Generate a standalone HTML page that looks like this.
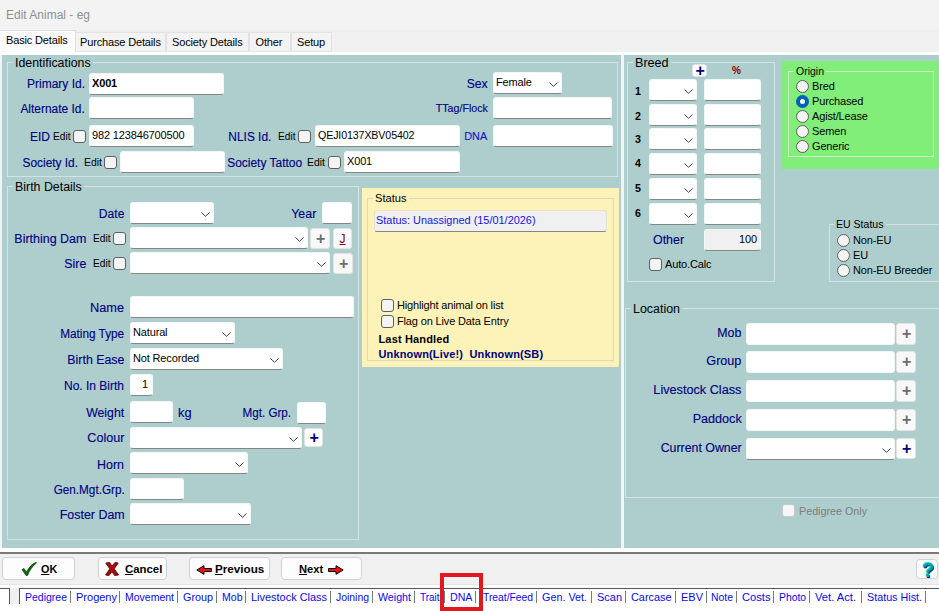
<!DOCTYPE html>
<html><head><meta charset="utf-8"><title>Edit Animal - eg</title>
<style>
*{margin:0;padding:0;}
html,body{width:939px;height:611px;overflow:hidden;background:#f3f3f3;font-family:"Liberation Sans",sans-serif;}
body{position:relative;}
div{position:absolute;box-sizing:border-box;white-space:nowrap;}
.title{left:6px;top:7px;font-size:12px;color:#909090;line-height:16px;}
.tab{background:#f3f3f3;border:1px solid #e2e2e2;border-bottom:1px solid #e6e6e6;font-size:11px;letter-spacing:-0.15px;line-height:19px;}
.tab span{position:absolute;left:5px;top:0px;}
.seltab{background:#fbfbfb;border-color:#e0e0e0;border-left:none;border-bottom:none;}
.seltab span{left:6px;top:0px;}
.gb{border:1px solid #d3e2e2;}
.gl{font-size:13px;line-height:12px;height:13px;padding:0 2px;color:#000;}
.gl span{position:absolute;left:2px;top:0.5px;display:inline-block;transform-origin:0 50%;}
.gl.sm2{font-size:11px;}
.gl.br{letter-spacing:0.1px;}
.lb{font-size:12px;line-height:16px;color:#000080;-webkit-text-stroke:0.12px #000080;transform:scaleX(.98);transform-origin:0 50%;}
.lb.r{transform-origin:100% 50%;}
.r{text-align:right;}
.sm{font-size:11px;line-height:16px;color:#000;letter-spacing:-0.15px;}
.bd{font-size:11px;font-weight:bold;line-height:16px;color:#000;letter-spacing:0.15px;}
.in{background:#fff;border:1px solid #f1f6f6;border-bottom-color:#868686;border-radius:3px;font-size:11px;letter-spacing:-0.15px;line-height:19.5px;padding-left:2px;color:#000;overflow:hidden;}
.in b{font-size:11px;}
.sx{display:inline-block;transform-origin:0 50%;}
.cb .chev{position:absolute;right:3.5px;top:8.5px;}
.stat{background:#f0f0f0;color:#1414e6;border-color:#e6e3c8;border-bottom-color:#868686;line-height:19px;padding-left:1px;}
.ck{background:#f4f4f4;border:1px solid #5f5f5f;border-radius:3px;}
.rd{background:#f4f4f4;border:1px solid #5f5f5f;border-radius:50%;}
.rd.sel{background:#fff;border:4px solid #005fb8;}
.bt{border-radius:3px;border:1px solid #e3e3e3;}
.gbt{background:#f8f8f8;}
.wbt{background:#fdfdfd;}
.jbt{background:#fafafa;color:#8b0000;font-size:12px;text-align:center;line-height:21px;}
.pl{position:absolute;left:50%;top:50%;width:12px;height:12px;margin:-6px 0 0 -5.3px;line-height:12px;text-align:center;font-size:16px;font-weight:bold;}
.pl.g{color:#6c6c6c;}
.pl.n{color:#000080;}
.bb{background:#fdfdfd;border:1px solid #d2d2d2;border-radius:4px;font-size:11px;font-weight:bold;}
.bb span{position:absolute;top:5px;line-height:13px;letter-spacing:0.2px;}
.q{left:5px;top:0px !important;font-size:20px;line-height:20px !important;color:#00a0a0;text-shadow:-0.7px -0.7px 0 #10e8e8,0.8px 0.8px 0 #10107a;letter-spacing:0 !important;}
.bt2{font-size:11px;letter-spacing:-0.15px;line-height:16px;color:#0808f0;}
</style></head>
<body>
<div class="title">Edit Animal - eg</div>
<div class="" style="left:0px;top:30px;width:939px;height:22px;background:#f0f0f0;"></div>
<div class="tab" style="left:75px;top:32px;width:91px;height:20px;"><span style="left:4px">Purchase Details</span></div>
<div class="tab" style="left:166px;top:32px;width:83px;height:20px;"><span style="left:5px">Society Details</span></div>
<div class="tab" style="left:249px;top:32px;width:42px;height:20px;"><span style="left:5.5px">Other</span></div>
<div class="tab" style="left:291px;top:32px;width:41px;height:20px;"><span style="left:5px">Setup</span></div>
<div class="" style="left:0px;top:52px;width:939px;height:3px;background:#fff;"></div>
<div class="tab seltab" style="left:0px;top:30px;width:76px;height:22px;"><span>Basic Details</span></div>
<div class="" style="left:2px;top:55px;width:619px;height:493px;background:#aecdcd;"></div>
<div class="" style="left:624px;top:55px;width:315px;height:493px;background:#aecdcd;"></div>
<div class="" style="left:621px;top:55px;width:3px;height:493px;background:#f4f4f4;"></div>
<div class="gb" style="left:7px;top:62px;width:611px;height:115px;border-color:#d3e2e2;"></div>
<div class="gl" style="left:12.9px;top:56px;width:80.1px;font-size:12px;background:#aecdcd;"><span style="transform:scaleX(1.0303);">Identifications</span></div>
<div class="lb r" style="right:854.2px;top:75.5px;transform:scaleX(0.9999);">Primary Id.</div>
<div class="in" style="left:89px;top:73px;width:135px;height:22px;"><b>X001</b></div>
<div class="lb r" style="right:854.2px;top:100.7px;transform:scaleX(0.9937);">Alternate Id.</div>
<div class="in" style="left:89px;top:97px;width:105px;height:22px;"></div>
<div class="lb r" style="right:889.0px;top:129px;transform:scaleX(0.9998);">EID</div>
<div class="sm" style="left:52.5px;top:127.69999999999999px;font-size:11px;letter-spacing:0;transform:scaleX(0.9232);transform-origin:0 50%;">Edit</div>
<div class="ck" style="left:73px;top:130px;width:13px;height:13px;"></div>
<div class="in" style="left:89px;top:125px;width:105px;height:22px;">982 123846700500</div>
<div class="lb r" style="right:861.0px;top:155px;transform:scaleX(0.9906);">Society Id.</div>
<div class="sm" style="left:83.5px;top:154px;font-size:11px;letter-spacing:0;transform:scaleX(0.9496);transform-origin:0 50%;">Edit</div>
<div class="ck" style="left:104px;top:156px;width:13px;height:13px;"></div>
<div class="in" style="left:120px;top:151px;width:105px;height:22px;"></div>
<div class="lb r" style="right:667.5px;top:129px;transform:scaleX(0.9918);">NLIS Id.</div>
<div class="sm" style="left:277.5px;top:127.69999999999999px;font-size:11px;letter-spacing:0;transform:scaleX(0.9232);transform-origin:0 50%;">Edit</div>
<div class="ck" style="left:298px;top:130px;width:13px;height:13px;"></div>
<div class="in" style="left:315px;top:125px;width:145px;height:22px;"><span class="sx" style="transform:scaleX(.972)">QEJI0137XBV05402</span></div>
<div class="lb r" style="right:636.5px;top:155px;transform:scaleX(0.9979);">Society Tattoo</div>
<div class="sm" style="left:306.5px;top:154px;font-size:11px;letter-spacing:0;transform:scaleX(0.9496);transform-origin:0 50%;">Edit</div>
<div class="ck" style="left:328px;top:156px;width:13px;height:13px;"></div>
<div class="in" style="left:344px;top:151px;width:116px;height:22px;">X001</div>
<div class="lb r" style="right:451.5px;top:75.5px;transform:scaleX(1.0156);">Sex</div>
<div class="in cb" style="left:493px;top:72px;width:69px;height:22px;">Female<svg class="chev" width="9" height="5" viewBox="0 0 9 5"><path d="M0.5 0.5 L4.5 4.3 L8.5 0.5" fill="none" stroke="#3c3c3c" stroke-width="1"/></svg></div>
<div class="lb r" style="right:451.5px;top:100px;font-size:11px;transform:scaleX(0.9667);">TTag/Flock</div>
<div class="in" style="left:493px;top:97px;width:119px;height:22px;"></div>
<div class="lb r" style="right:451.5px;top:128px;font-size:11px;transform:scaleX(0.9903);color:#1a1acd;">DNA</div>
<div class="in" style="left:493px;top:125px;width:120px;height:22px;"></div>
<div class="gb" style="left:7px;top:186px;width:352px;height:354px;border-color:#d3e2e2;"></div>
<div class="gl" style="left:12.7px;top:180px;width:71.3px;font-size:12px;background:#aecdcd;"><span style="transform:scaleX(1.0327);">Birth Details</span></div>
<div class="lb r" style="right:814.5px;top:205.5px;transform:scaleX(1.006);">Date</div>
<div class="in cb" style="left:130px;top:202px;width:84px;height:22px;"><svg class="chev" width="9" height="5" viewBox="0 0 9 5"><path d="M0.5 0.5 L4.5 4.3 L8.5 0.5" fill="none" stroke="#3c3c3c" stroke-width="1"/></svg></div>
<div class="lb r" style="right:622.5px;top:205.5px;transform:scaleX(1.0311);">Year</div>
<div class="in" style="left:322px;top:202px;width:30px;height:22px;"></div>
<div class="lb r" style="right:852.5px;top:230.5px;transform:scaleX(1.0381);">Birthing Dam</div>
<div class="sm" style="left:92.5px;top:229.8px;font-size:11px;letter-spacing:0;transform:scaleX(0.9232);transform-origin:0 50%;">Edit</div>
<div class="ck" style="left:113px;top:232px;width:13px;height:13px;"></div>
<div class="in cb" style="left:130px;top:227px;width:178px;height:22px;"><svg class="chev" width="9" height="5" viewBox="0 0 9 5"><path d="M0.5 0.5 L4.5 4.3 L8.5 0.5" fill="none" stroke="#3c3c3c" stroke-width="1"/></svg></div>
<div class="bt gbt" style="left:310px;top:228px;width:20px;height:21px;"><span class="pl g">+</span></div>
<div class="bt jbt" style="left:333px;top:228px;width:19px;height:21px;"><u>J</u></div>
<div class="lb r" style="right:852.5px;top:255.5px;transform:scaleX(1.0309);">Sire</div>
<div class="sm" style="left:92.5px;top:254.8px;font-size:11px;letter-spacing:0;transform:scaleX(0.9232);transform-origin:0 50%;">Edit</div>
<div class="ck" style="left:113px;top:257px;width:13px;height:13px;"></div>
<div class="in cb" style="left:130px;top:252px;width:200px;height:22px;"><svg class="chev" width="9" height="5" viewBox="0 0 9 5"><path d="M0.5 0.5 L4.5 4.3 L8.5 0.5" fill="none" stroke="#3c3c3c" stroke-width="1"/></svg></div>
<div class="bt gbt" style="left:333px;top:253px;width:20px;height:21px;"><span class="pl g">+</span></div>
<div class="lb r" style="right:814.5px;top:299.5px;transform:scaleX(1.0622);">Name</div>
<div class="in" style="left:130px;top:296px;width:224px;height:22px;"></div>
<div class="lb r" style="right:814.5px;top:325.5px;transform:scaleX(0.9823);">Mating Type</div>
<div class="in cb" style="left:130px;top:322px;width:105px;height:22px;">Natural<svg class="chev" width="9" height="5" viewBox="0 0 9 5"><path d="M0.5 0.5 L4.5 4.3 L8.5 0.5" fill="none" stroke="#3c3c3c" stroke-width="1"/></svg></div>
<div class="lb r" style="right:814.5px;top:352.3px;transform:scaleX(1.0296);">Birth Ease</div>
<div class="in cb" style="left:130px;top:348px;width:153px;height:22px;">Not Recorded<svg class="chev" width="9" height="5" viewBox="0 0 9 5"><path d="M0.5 0.5 L4.5 4.3 L8.5 0.5" fill="none" stroke="#3c3c3c" stroke-width="1"/></svg></div>
<div class="lb r" style="right:814.5px;top:377.5px;transform:scaleX(0.9996);">No. In Birth</div>
<div class="in" style="left:130px;top:374px;width:23px;height:22px;text-align:right;padding-right:4px;">1</div>
<div class="lb r" style="right:814.5px;top:405px;transform:scaleX(1.0234);">Weight</div>
<div class="in" style="left:130px;top:401px;width:43px;height:22px;"></div>
<div class="lb" style="left:177.5px;top:405px;transform:scaleX(1.0652);transform-origin:0 50%;">kg</div>
<div class="lb r" style="right:648.0px;top:405px;transform:scaleX(0.9698);">Mgt. Grp.</div>
<div class="in" style="left:297px;top:402px;width:29px;height:22px;"></div>
<div class="lb r" style="right:814.5px;top:430px;transform:scaleX(1.0467);">Colour</div>
<div class="in cb" style="left:130px;top:427px;width:172px;height:22px;"><svg class="chev" width="9" height="5" viewBox="0 0 9 5"><path d="M0.5 0.5 L4.5 4.3 L8.5 0.5" fill="none" stroke="#3c3c3c" stroke-width="1"/></svg></div>
<div class="bt wbt" style="left:304px;top:428px;width:19px;height:19px;"><span class="pl n">+</span></div>
<div class="lb r" style="right:814.5px;top:457px;transform:scaleX(1.0381);">Horn</div>
<div class="in cb" style="left:130px;top:452px;width:118px;height:22px;"><svg class="chev" width="9" height="5" viewBox="0 0 9 5"><path d="M0.5 0.5 L4.5 4.3 L8.5 0.5" fill="none" stroke="#3c3c3c" stroke-width="1"/></svg></div>
<div class="lb r" style="right:814.5px;top:481.5px;transform:scaleX(0.9767);">Gen.Mgt.Grp.</div>
<div class="in" style="left:130px;top:478px;width:54px;height:22px;"></div>
<div class="lb r" style="right:814.5px;top:506.5px;transform:scaleX(1.0371);">Foster Dam</div>
<div class="in cb" style="left:130px;top:503px;width:121px;height:22px;"><svg class="chev" width="9" height="5" viewBox="0 0 9 5"><path d="M0.5 0.5 L4.5 4.3 L8.5 0.5" fill="none" stroke="#3c3c3c" stroke-width="1"/></svg></div>
<div class="" style="left:362px;top:188px;width:257px;height:179px;background:#fdf3b9;"></div>
<div class="gb" style="left:367px;top:198px;width:247px;height:163px;border-color:#dcdabc;"></div>
<div class="gl" style="left:372.8px;top:193px;width:36.0px;font-size:11px;background:#fdf3b9;"><span style="transform:scaleX(1.0101);top:-1px;">Status</span></div>
<div class="in stat" style="left:374px;top:210px;width:233px;height:22px;"><span class="sx" style="letter-spacing:0;transform:scaleX(.992)">Status: Unassigned (15/01/2026)</span></div>
<div class="ck" style="left:381px;top:299px;width:13px;height:13px;"></div>
<div class="sm" style="left:397px;top:297.3px;">Highlight animal on list</div>
<div class="ck" style="left:381px;top:315px;width:13px;height:13px;"></div>
<div class="sm" style="left:397px;top:313.2px;">Flag on Live Data Entry</div>
<div class="bd" style="left:378.5px;top:330.8px;">Last Handled</div>
<div class="bd" style="left:378.5px;top:345.6px;color:#000080;">Unknown(Live!)&nbsp; Unknown(SB)</div>
<div class="gb" style="left:627px;top:62px;width:148px;height:220px;border-color:#d3e2e2;"></div>
<div class="gl" style="left:632.9px;top:56px;width:38.1px;font-size:12px;background:#aecdcd;"><span style="transform:scaleX(1.0493);">Breed</span></div>
<div class="bt wbt" style="left:692px;top:64px;width:15px;height:13px;"><span class="pl n">+</span></div>
<div class="bd" style="left:732px;top:62.8px;color:#8b0000;font-size:10px;">%</div>
<div class="bd" style="left:635px;top:82.5px;font-size:10.67px;">1</div>
<div class="in cb" style="left:649px;top:79px;width:48px;height:22px;"><svg class="chev" width="9" height="5" viewBox="0 0 9 5"><path d="M0.5 0.5 L4.5 4.3 L8.5 0.5" fill="none" stroke="#3c3c3c" stroke-width="1"/></svg></div>
<div class="in" style="left:704px;top:79px;width:57px;height:22px;"></div>
<div class="bd" style="left:635px;top:107.5px;font-size:10.67px;">2</div>
<div class="in cb" style="left:649px;top:104px;width:48px;height:22px;"><svg class="chev" width="9" height="5" viewBox="0 0 9 5"><path d="M0.5 0.5 L4.5 4.3 L8.5 0.5" fill="none" stroke="#3c3c3c" stroke-width="1"/></svg></div>
<div class="in" style="left:704px;top:104px;width:57px;height:22px;"></div>
<div class="bd" style="left:635px;top:131px;font-size:10.67px;">3</div>
<div class="in cb" style="left:649px;top:128px;width:48px;height:22px;"><svg class="chev" width="9" height="5" viewBox="0 0 9 5"><path d="M0.5 0.5 L4.5 4.3 L8.5 0.5" fill="none" stroke="#3c3c3c" stroke-width="1"/></svg></div>
<div class="in" style="left:704px;top:128px;width:57px;height:22px;"></div>
<div class="bd" style="left:635px;top:155.3px;font-size:10.67px;">4</div>
<div class="in cb" style="left:649px;top:153px;width:48px;height:22px;"><svg class="chev" width="9" height="5" viewBox="0 0 9 5"><path d="M0.5 0.5 L4.5 4.3 L8.5 0.5" fill="none" stroke="#3c3c3c" stroke-width="1"/></svg></div>
<div class="in" style="left:704px;top:153px;width:57px;height:22px;"></div>
<div class="bd" style="left:635px;top:180px;font-size:10.67px;">5</div>
<div class="in cb" style="left:649px;top:178px;width:48px;height:22px;"><svg class="chev" width="9" height="5" viewBox="0 0 9 5"><path d="M0.5 0.5 L4.5 4.3 L8.5 0.5" fill="none" stroke="#3c3c3c" stroke-width="1"/></svg></div>
<div class="in" style="left:704px;top:178px;width:57px;height:22px;"></div>
<div class="bd" style="left:635px;top:205px;font-size:10.67px;">6</div>
<div class="in cb" style="left:649px;top:203px;width:48px;height:22px;"><svg class="chev" width="9" height="5" viewBox="0 0 9 5"><path d="M0.5 0.5 L4.5 4.3 L8.5 0.5" fill="none" stroke="#3c3c3c" stroke-width="1"/></svg></div>
<div class="in" style="left:704px;top:203px;width:57px;height:22px;"></div>
<div class="lb r" style="right:254.5px;top:231.5px;transform:scaleX(1.0329);">Other</div>
<div class="in" style="left:704px;top:229px;width:57px;height:22px;background:#f0f0f0;text-align:right;padding-right:3px;">100</div>
<div class="ck" style="left:649px;top:258px;width:13px;height:13px;"></div>
<div class="sm" style="left:665px;top:255.7px;">Auto.Calc</div>
<div class="" style="left:781px;top:61px;width:158px;height:108px;background:#80ee78;"></div>
<div class="gb" style="left:788px;top:71px;width:146px;height:86px;border-color:#d2f0cc;"></div>
<div class="gl" style="left:793.5px;top:66px;width:32.5px;font-size:11px;background:#80ee78;"><span style="transform:scaleX(0.9543);top:-1px;">Origin</span></div>
<div class="rd" style="left:796px;top:79.5px;width:13px;height:13px;"></div>
<div class="sm" style="left:812px;top:78px;">Bred</div>
<div class="rd sel" style="left:796px;top:94.5px;width:13px;height:13px;"></div>
<div class="sm" style="left:812px;top:93px;">Purchased</div>
<div class="rd" style="left:796px;top:109.5px;width:13px;height:13px;"></div>
<div class="sm" style="left:812px;top:108px;">Agist/Lease</div>
<div class="rd" style="left:796px;top:124.5px;width:13px;height:13px;"></div>
<div class="sm" style="left:812px;top:123px;">Semen</div>
<div class="rd" style="left:796px;top:139.5px;width:13px;height:13px;"></div>
<div class="sm" style="left:812px;top:138px;">Generic</div>
<div class="gb" style="left:829px;top:224px;width:116px;height:58px;border-color:#d3e2e2;"></div>
<div class="gl" style="left:834.0px;top:219px;width:52.0px;font-size:11px;background:#aecdcd;"><span style="transform:scaleX(0.9591);top:-1px;">EU Status</span></div>
<div class="rd" style="left:837px;top:233.5px;width:13px;height:13px;"></div>
<div class="sm" style="left:853px;top:232px;">Non-EU</div>
<div class="rd" style="left:837px;top:248.5px;width:13px;height:13px;"></div>
<div class="sm" style="left:853px;top:247px;">EU</div>
<div class="rd" style="left:837px;top:263.5px;width:13px;height:13px;"></div>
<div class="sm" style="left:853px;top:262px;">Non-EU Breeder</div>
<div class="gb" style="left:625px;top:308px;width:320px;height:190px;border-color:#d3e2e2;"></div>
<div class="gl" style="left:630.5px;top:302px;width:51.5px;font-size:12px;background:#aecdcd;"><span style="transform:scaleX(1.0359);">Location</span></div>
<div class="lb r" style="right:197.5px;top:325.0px;transform:scaleX(1.0281);">Mob</div>
<div class="in" style="left:746px;top:323px;width:149px;height:22px;border-bottom-color:#f1f6f6;"></div>
<div class="bt gbt" style="left:896px;top:323px;width:20px;height:22px;"><span class="pl g">+</span></div>
<div class="lb r" style="right:197.5px;top:353.0px;transform:scaleX(1.0494);">Group</div>
<div class="in" style="left:746px;top:351px;width:149px;height:22px;border-bottom-color:#f1f6f6;"></div>
<div class="bt gbt" style="left:896px;top:351px;width:20px;height:22px;"><span class="pl g">+</span></div>
<div class="lb r" style="right:197.5px;top:382.0px;transform:scaleX(1.0556);">Livestock Class</div>
<div class="in" style="left:746px;top:380px;width:149px;height:22px;border-bottom-color:#f1f6f6;"></div>
<div class="bt gbt" style="left:896px;top:380px;width:20px;height:22px;"><span class="pl g">+</span></div>
<div class="lb r" style="right:197.5px;top:411.0px;transform:scaleX(1.0493);">Paddock</div>
<div class="in" style="left:746px;top:409px;width:149px;height:22px;border-bottom-color:#f1f6f6;"></div>
<div class="bt gbt" style="left:896px;top:409px;width:20px;height:22px;"><span class="pl g">+</span></div>
<div class="lb r" style="right:197.5px;top:439.5px;transform:scaleX(1.0293);">Current Owner</div>
<div class="in cb" style="left:746px;top:438px;width:149px;height:22px;"><svg class="chev" width="9" height="5" viewBox="0 0 9 5"><path d="M0.5 0.5 L4.5 4.3 L8.5 0.5" fill="none" stroke="#3c3c3c" stroke-width="1"/></svg></div>
<div class="bt wbt" style="left:896px;top:438px;width:20px;height:21px;"><span class="pl n">+</span></div>
<div class="ck" style="left:782px;top:504px;width:13px;height:13px;border-color:#c8c8c8;background:#f6f6f6;"></div>
<div class="lb" style="left:798.5px;top:502.5px;font-size:11.5px;letter-spacing:0;transform:scaleX(0.9331);transform-origin:0 50%;color:#7d7d7d;-webkit-text-stroke:0;">Pedigree Only</div>
<div class="" style="left:0px;top:548px;width:939px;height:4px;background:#fff;"></div>
<div class="" style="left:0px;top:552px;width:939px;height:2px;background:#7a7a7a;"></div>
<div class="" style="left:0px;top:554px;width:939px;height:31px;background:#f0f0f0;"></div>
<div class="bb" style="left:2px;top:557px;width:73px;height:23px;"><svg width="16" height="14" viewBox="0 0 16 14" style="position:absolute;left:18px;top:4px"><path d="M1 7.5 L3 6.5 L5.5 10 C8 5 11 2 15 0.3 L15.5 1 C12 3.5 9 7.5 6.5 13.5 L5 13.5 Z" fill="#0a6b0a" stroke="#003000" stroke-width="0.6"/></svg><span style="left:37.5px;transform:scaleX(0.9818);transform-origin:0 50%;letter-spacing:0"><u>O</u>K</span></div>
<div class="bb" style="left:98px;top:557px;width:69px;height:23px;"><svg width="14" height="14" viewBox="0 0 14 14" style="position:absolute;left:6px;top:4px"><path d="M0.8 1 L4.6 0.5 L7 4 L10 0.5 L13.2 1 L9.2 6.8 L13.5 13 L9.6 13.5 L7 9.6 L4 13.5 L0.6 13 L4.8 6.8 Z" fill="#a80c0c" stroke="#600000" stroke-width="0.9"/></svg><span style="left:25.5px;transform:scaleX(1.0341);transform-origin:0 50%;letter-spacing:0"><u>C</u>ancel</span></div>
<div class="bb" style="left:189px;top:557px;width:81px;height:23px;"><svg width="16" height="10" viewBox="0 0 16 10" style="position:absolute;left:6px;top:7px"><path d="M0.8 5 L8 0.7 L8 3.5 L15.4 3.5 L15.4 6.5 L8 6.5 L8 9.3 Z" fill="#ee1111" stroke="#000" stroke-width="1"/></svg><span style="left:24.80000000000001px;transform:scaleX(1.061);transform-origin:0 50%;letter-spacing:0"><u>P</u>revious</span></div>
<div class="bb" style="left:281px;top:557px;width:81px;height:23px;"><svg width="16" height="10" viewBox="0 0 16 10" style="position:absolute;left:45.5px;top:7px"><path d="M15.2 5 L8 0.7 L8 3.5 L0.6 3.5 L0.6 6.5 L8 6.5 L8 9.3 Z" fill="#ee1111" stroke="#000" stroke-width="1"/></svg><span style="left:16.899999999999977px;transform:scaleX(1.015);transform-origin:0 50%;letter-spacing:0"><u>N</u>ext</span></div>
<div class="bb" style="left:916px;top:559px;width:22px;height:20px;"><span class="q">?</span></div>
<div class="" style="left:0px;top:585px;width:939px;height:26px;background:#fff;"></div>
<div class="" style="left:0px;top:584px;width:939px;height:1px;background:#e6e6e6;"></div>
<div class="" style="left:0px;top:585px;width:939px;height:3px;background:#fbfbfb;"></div>
<div class="" style="left:0px;top:588px;width:10px;height:16px;background:#fff;border-top:1px solid #555;border-right:1px solid #555;box-sizing:border-box;"></div>
<div class="" style="left:10px;top:588px;width:9px;height:16px;background:#f0f0f0;"></div>
<div class="" style="left:19px;top:588px;width:920px;height:1px;background:#555;"></div>
<div class="" style="left:19px;top:588px;width:1px;height:16px;background:#555;"></div>
<div class="bt2" style="left:24.5px;top:589px;font-size:11px;letter-spacing:0;transform:scaleX(0.9539);transform-origin:0 50%;">Pedigree</div>
<div class="" style="left:70px;top:591px;width:1px;height:12px;background:#7a7a7a;"></div>
<div class="bt2" style="left:75.5px;top:589px;font-size:11px;letter-spacing:0;transform:scaleX(1.0007);transform-origin:0 50%;">Progeny</div>
<div class="" style="left:119px;top:591px;width:1px;height:12px;background:#7a7a7a;"></div>
<div class="bt2" style="left:124.5px;top:589px;font-size:11px;letter-spacing:0;transform:scaleX(0.9542);transform-origin:0 50%;">Movement</div>
<div class="" style="left:177px;top:591px;width:1px;height:12px;background:#7a7a7a;"></div>
<div class="bt2" style="left:182.5px;top:589px;font-size:11px;letter-spacing:0;transform:scaleX(0.9813);transform-origin:0 50%;">Group</div>
<div class="" style="left:216px;top:591px;width:1px;height:12px;background:#7a7a7a;"></div>
<div class="bt2" style="left:221.5px;top:589px;font-size:11px;letter-spacing:0;transform:scaleX(0.958);transform-origin:0 50%;">Mob</div>
<div class="" style="left:245px;top:591px;width:1px;height:12px;background:#7a7a7a;"></div>
<div class="bt2" style="left:250.5px;top:589px;font-size:11px;letter-spacing:0;transform:scaleX(0.9946);transform-origin:0 50%;">Livestock Class</div>
<div class="" style="left:330px;top:591px;width:1px;height:12px;background:#7a7a7a;"></div>
<div class="bt2" style="left:335.5px;top:589px;font-size:11px;letter-spacing:0;transform:scaleX(0.9468);transform-origin:0 50%;">Joining</div>
<div class="" style="left:372px;top:591px;width:1px;height:12px;background:#7a7a7a;"></div>
<div class="bt2" style="left:377.5px;top:589px;font-size:11px;letter-spacing:0;transform:scaleX(0.9696);transform-origin:0 50%;">Weight</div>
<div class="" style="left:414px;top:591px;width:1px;height:12px;background:#7a7a7a;"></div>
<div class="bt2" style="left:419.5px;top:589px;font-size:11px;letter-spacing:0;transform:scaleX(0.908);transform-origin:0 50%;">Traits</div>
<div class="" style="left:444px;top:591px;width:1px;height:12px;background:#7a7a7a;"></div>
<div class="bt2" style="left:449.5px;top:589px;font-size:11px;letter-spacing:0;transform:scaleX(0.9645);transform-origin:0 50%;">DNA</div>
<div class="" style="left:475px;top:591px;width:1px;height:12px;background:#7a7a7a;"></div>
<div class="bt2" style="left:482.5px;top:589px;font-size:11px;letter-spacing:0;transform:scaleX(0.9365);transform-origin:0 50%;">Treat/Feed</div>
<div class="" style="left:536px;top:591px;width:1px;height:12px;background:#7a7a7a;"></div>
<div class="bt2" style="left:541.5px;top:589px;font-size:11px;letter-spacing:0;transform:scaleX(0.9811);transform-origin:0 50%;">Gen. Vet.</div>
<div class="" style="left:591px;top:591px;width:1px;height:12px;background:#7a7a7a;"></div>
<div class="bt2" style="left:596.5px;top:589px;font-size:11px;letter-spacing:0;transform:scaleX(0.9971);transform-origin:0 50%;">Scan</div>
<div class="" style="left:625px;top:591px;width:1px;height:12px;background:#7a7a7a;"></div>
<div class="bt2" style="left:631.0px;top:589px;font-size:11px;letter-spacing:0;transform:scaleX(0.9888);transform-origin:0 50%;">Carcase</div>
<div class="" style="left:675px;top:591px;width:1px;height:12px;background:#7a7a7a;"></div>
<div class="bt2" style="left:680.5px;top:589px;font-size:11px;letter-spacing:0;transform:scaleX(0.9994);transform-origin:0 50%;">EBV</div>
<div class="" style="left:706px;top:591px;width:1px;height:12px;background:#7a7a7a;"></div>
<div class="bt2" style="left:711.0px;top:589px;font-size:11px;letter-spacing:0;transform:scaleX(0.9469);transform-origin:0 50%;">Note</div>
<div class="" style="left:736px;top:591px;width:1px;height:12px;background:#7a7a7a;"></div>
<div class="bt2" style="left:741.5px;top:589px;font-size:11px;letter-spacing:0;transform:scaleX(1.0136);transform-origin:0 50%;">Costs</div>
<div class="" style="left:773px;top:591px;width:1px;height:12px;background:#7a7a7a;"></div>
<div class="bt2" style="left:778.5px;top:589px;font-size:11px;letter-spacing:0;transform:scaleX(0.9393);transform-origin:0 50%;">Photo</div>
<div class="" style="left:809px;top:591px;width:1px;height:12px;background:#7a7a7a;"></div>
<div class="bt2" style="left:814.5px;top:589px;font-size:11px;letter-spacing:0;transform:scaleX(1.0158);transform-origin:0 50%;">Vet. Act.</div>
<div class="" style="left:861px;top:591px;width:1px;height:12px;background:#7a7a7a;"></div>
<div class="bt2" style="left:866.5px;top:589px;font-size:11px;letter-spacing:0;transform:scaleX(0.9779);transform-origin:0 50%;">Status Hist.</div>
<div class="" style="left:925px;top:591px;width:1px;height:12px;background:#7a7a7a;"></div>
<div class="" style="left:440px;top:573px;width:43px;height:38px;border:4px solid #e1191d;box-sizing:border-box;"></div>
</body></html>
